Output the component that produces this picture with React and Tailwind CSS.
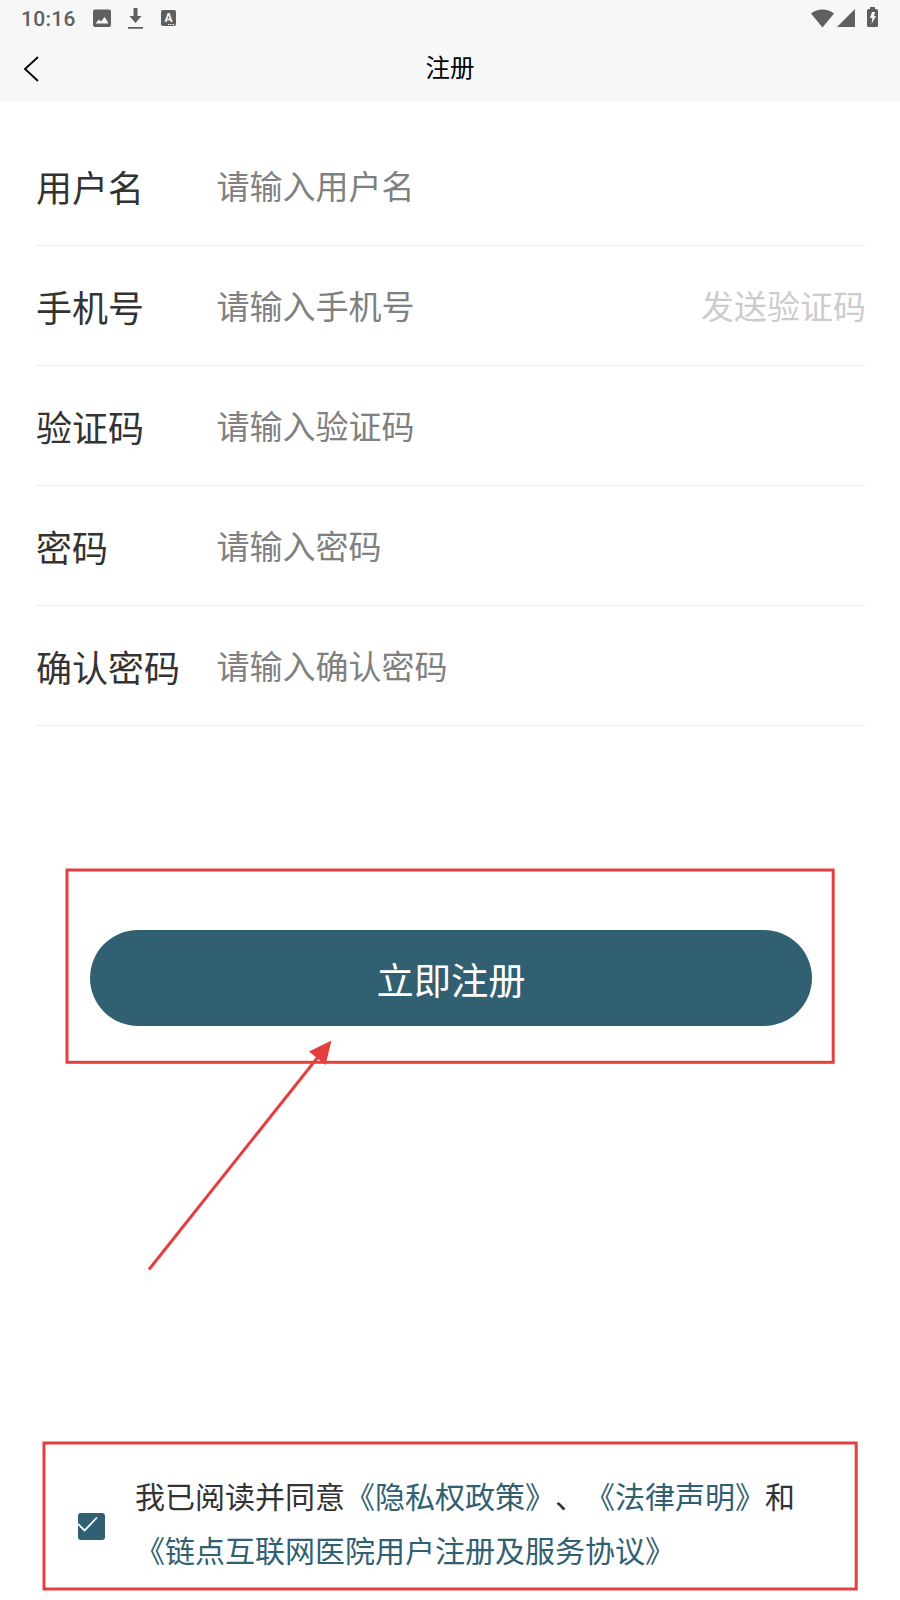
import React, { useState } from "react";

const fields = [
    { id: "username", label: "用户名", placeholder: "请输入用户名", type: "text" },
    { id: "phone", label: "手机号", placeholder: "请输入手机号", type: "tel", action: "发送验证码" },
    { id: "code", label: "验证码", placeholder: "请输入验证码", type: "text" },
    { id: "password", label: "密码", placeholder: "请输入密码", type: "password" },
    { id: "confirm", label: "确认密码", placeholder: "请输入确认密码", type: "password" },
];

const StatusBar = () => (
    <div className="flex h-9 items-center justify-between pr-[22px] pl-[21px] text-[#5f5f5f]">
        <div className="flex items-center">
            <span className="w-[72px] pt-0.5 font-['Roboto',sans-serif] text-[21px] leading-9 font-medium tracking-[0.3px]">10:16</span>
            {/* image */}
            <svg className="h-[18px] w-[18px]" viewBox="0 0 18 18">
                <rect width="18" height="17.5" y="0.5" rx="2" fill="currentColor" />
                <path d="M2.500 14.500 6 10.500l2 2 3.500-4.500 1.500 2 2.500 4.500z" fill="#f7f7f7" />
            </svg>
            {/* download */}
            <svg className="ml-[17px] h-[21px] w-[15px]" viewBox="0 0 15 21">
                <path d="M5.500 0h4v8h4L7.500 15 1.500 8h4zM0 19h15v1.800H0z" fill="currentColor" />
            </svg>
            <span className="relative ml-[18px] flex h-4 w-[15px] items-center justify-center rounded-[2px] bg-[#5f5f5f] font-['Roboto',sans-serif] text-[12px] leading-none font-bold text-[#f7f7f7]">
                A
                <svg className="absolute right-0.5 bottom-px h-px w-[6px]" viewBox="0 0 6 1">
                    <path d="M0 0h1.400v1H0zM2.300 0h1.400v1H2.300zM4.600 0H6v1H4.600z" fill="#f7f7f7" />
                </svg>
            </span>
        </div>
        <div className="flex items-center">
            {/* wifi */}
            <svg className="h-[19px] w-[23px]" viewBox="0 0 23 19">
                <path d="M0 4.500C6.500-.900 16.500-.900 23 4.500L11.500 18.500z" fill="currentColor" />
            </svg>
            {/* signal */}
            <svg className="ml-[3px] h-[18px] w-[18px]" viewBox="0 0 18 18">
                <path d="M18 0v18H0z" fill="currentColor" />
            </svg>
            {/* battery */}
            <svg className="-mt-0.5 ml-3 h-5 w-[11px]" viewBox="0 0 11 20">
                <path d="M3 0h5v2h1.500Q11 2 11 3.500V18.500Q11 20 9.500 20h-8Q0 20 0 18.500v-15Q0 2 1.500 2H3z" fill="currentColor" />
                <path d="M5 5h3L7 9h2l-4.500 8 .8-6H3z" fill="#f7f7f7" />
            </svg>
        </div>
    </div>
);

const Field = ({ field }) => (
    <div className="flex h-[120px] items-center border-b border-[#ececec]">
        <label htmlFor={field.id} className="w-[180.500px] shrink-0 text-[36px] leading-[54px] text-[#333333]">
            {field.label}
        </label>
        <input
            id={field.id}
            type={field.type}
            placeholder={field.placeholder}
            className="-mt-0.5 h-[54px] min-w-0 flex-1 text-[33px] outline-none placeholder:text-[#808080]"
        />
        {field.action && <button className="-mt-0.5 text-[33px] leading-[54px] text-[#cccccc]">{field.action}</button>}
    </div>
);

// red highlight boxes and the arrow pointing at the button
const Annotations = () => (
    <svg className="pointer-events-none absolute inset-0 h-[1600px] w-[900px]" viewBox="0 0 900 1600" fill="none" stroke="#e53e3e" strokeWidth="3">
        <rect x="67" y="870" width="766.200" height="192.300" />
        <rect x="44" y="1443" width="812.200" height="146" />
        <path d="M149 1269.500 318 1057" />
        <path d="M331.500 1040.500 325.500 1065 309 1051.500z" fill="#e53e3e" stroke="none" />
    </svg>
);

const App = () => {
    const [agreed, setAgreed] = useState(true);

    return (
        <div className="relative flex h-[1600px] w-[900px] flex-col overflow-hidden bg-white font-['Noto_Sans_CJK_SC',sans-serif]">
            <header className="h-[102px] bg-[#f7f7f7]">
                <StatusBar />
                <div className="flex h-[66px] items-center px-[23px]">
                    <button className="w-16" aria-label="back">
                        <svg className="h-[26px] w-4" viewBox="0 0 16 26" fill="none" stroke="#000" strokeWidth="1.8">
                            <path d="M15 1 2 13l13 12" />
                        </svg>
                    </button>
                    <h1 className="flex-1 pb-1 text-center text-[24.500px] text-black">注册</h1>
                    <div className="w-16" />
                </div>
            </header>

            <form className="mt-6 pr-[34px] pl-9">
                {fields.map((field) => (
                    <Field key={field.id} field={field} />
                ))}
            </form>

            <button className="mt-[204px] ml-[90px] h-24 w-[722px] rounded-full bg-[#306072] pt-[3px] text-[37.300px] text-white">
                立即注册
            </button>

            <div className="mt-auto mb-6 flex items-center pl-[78px]">
                <button
                    onClick={() => setAgreed(!agreed)}
                    aria-label="agree"
                    className="mt-2 mr-[30px] h-[27px] w-[27px] shrink-0 rounded-[3px] bg-[#306072]"
                >
                    {agreed && (
                        <svg className="h-[27px] w-[27px]" viewBox="0 0 27 27" fill="none" stroke="#fff" strokeWidth="1.8">
                            <path d="M0 11l6.500 6.500L19 4.500" />
                        </svg>
                    )}
                </button>
                <p className="text-[30px] leading-[54px] whitespace-nowrap text-[#333333] [text-spacing-trim:space-all]">
                    我已阅读并同意<span className="text-[#306072]">《隐私权政策》</span>、<span className="text-[#306072]">《法律声明》</span>和
                    <br />
                    <span className="text-[#306072]">《链点互联网医院用户注册及服务协议》</span>
                </p>
            </div>

            <Annotations />
        </div>
    );
};

export default App;
